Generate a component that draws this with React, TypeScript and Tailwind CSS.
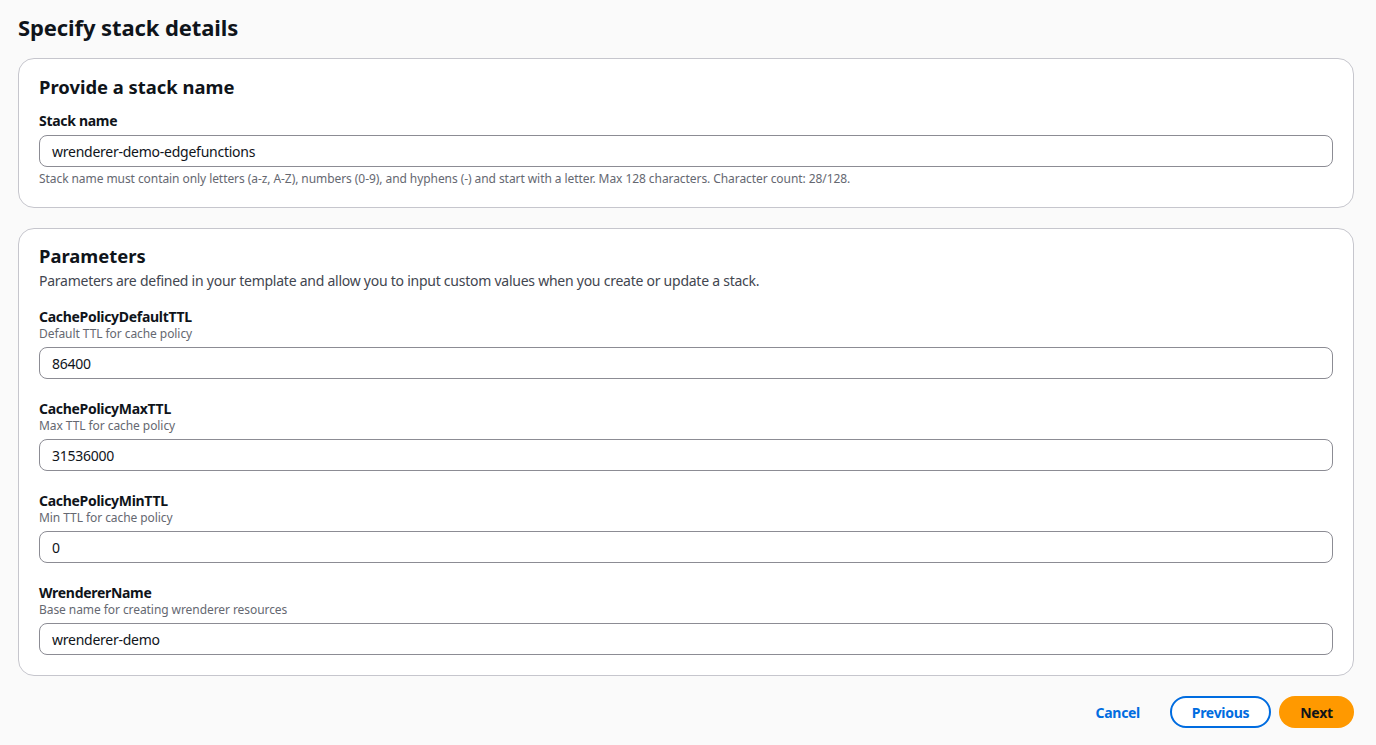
import React from "react";

const font = { fontFamily: '"Noto Sans", "Open Sans", sans-serif' };

function Field({ label, desc, value }: { label: string; desc?: string; value: string }) {
  return (
    <div className="flex flex-col">
      <div className="text-[14px] font-bold leading-[18px] tracking-[-0.3px] text-[#0f141a]">{label}</div>
      {desc && <div className="text-[12px] leading-[16px] tracking-[-0.07px] text-[#656871]">{desc}</div>}
      <div className="mt-[5px] h-[32px] rounded-[8px] border border-[#8c8c94] bg-white px-[12px] flex items-center text-[14px] tracking-[-0.25px] text-[#0f141a]">
        {value}
      </div>
    </div>
  );
}

export default function App() {
  return (
    <div style={font} className="min-h-[745px] bg-[#fafafa] pl-[18px] pr-[22px] pt-[11px] pb-[16px] text-[#0f141a]">
      <h1 className="text-[22px] font-bold leading-[32px] mb-[15px] tracking-[-0.1px]">Specify stack details</h1>
      <div className="rounded-[16px] border border-[#c6c6cd] bg-white px-[20px] pt-[14px] pb-[20px]">
        <h2 className="text-[18.4px] font-bold leading-[28px] mb-[11px]">Provide a stack name</h2>
        <Field label="Stack name" value="wrenderer-demo-edgefunctions" />
        <div className="mt-[4px] text-[12px] leading-[16px] tracking-[-0.07px] text-[#656871]">
          Stack name must contain only letters (a-z, A-Z), numbers (0-9), and hyphens (-) and start with a letter. Max 128 characters. Character count: 28/128.
        </div>
      </div>
      <div className="mt-[20px] rounded-[16px] border border-[#c6c6cd] bg-white px-[20px] pt-[13px] pb-[20px]">
        <h2 className="text-[18.4px] font-bold leading-[28px]">Parameters</h2>
        <div className="mt-[1px] text-[14px] leading-[20px] tracking-[-0.25px] text-[#424650]">
          Parameters are defined in your template and allow you to input custom values when you create or update a stack.
        </div>
        <div className="mt-[17px] flex flex-col gap-[21px]">
          <Field label="CachePolicyDefaultTTL" desc="Default TTL for cache policy" value="86400" />
          <Field label="CachePolicyMaxTTL" desc="Max TTL for cache policy" value="31536000" />
          <Field label="CachePolicyMinTTL" desc="Min TTL for cache policy" value="0" />
          <Field label="WrendererName" desc="Base name for creating wrenderer resources" value="wrenderer-demo" />
        </div>
      </div>
      <div className="mt-[20px] flex justify-end items-center gap-[8px]">
        <button className="h-[32px] px-[22px] text-[14px] font-bold tracking-[-0.3px] text-[#006ce0]">Cancel</button>
        <button className="h-[32px] w-[101px] rounded-full border-2 border-[#006ce0] text-[14px] font-bold tracking-[-0.3px] text-[#006ce0] bg-white">Previous</button>
        <button className="h-[32px] w-[75px] rounded-full bg-[#ff9900] text-[14px] font-bold tracking-[-0.3px] text-[#0f141a]">Next</button>
      </div>
    </div>
  );
}
